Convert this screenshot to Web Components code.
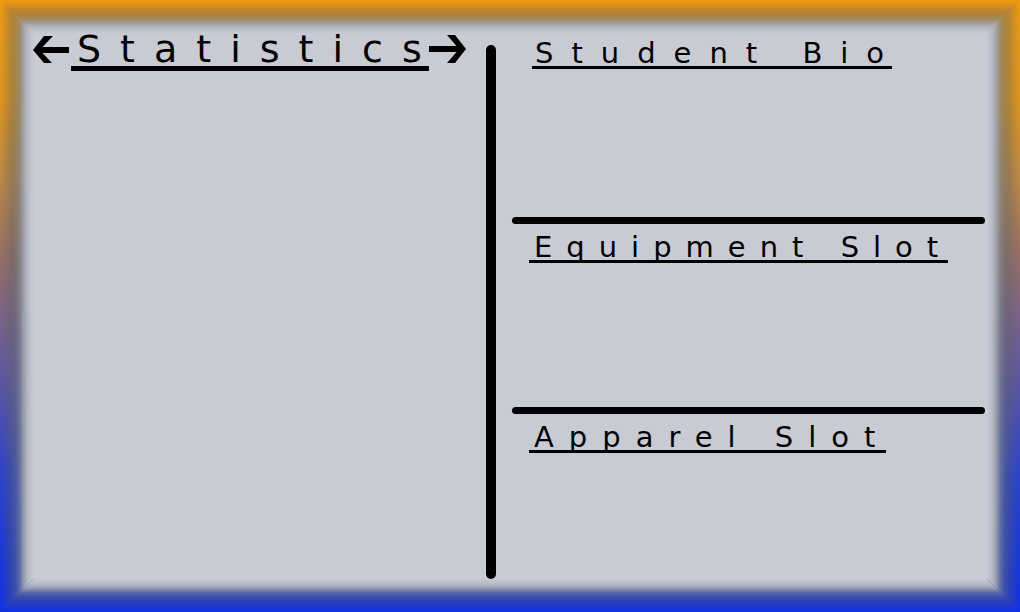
<!DOCTYPE html>
<html lang="en">
<head>
<meta charset="utf-8">
<title>Student Profile</title>
<style>
  body { margin: 0; font-family: "DejaVu Sans", sans-serif; color: #000; }
</style>
</head>
<body>
<glow-frame>
  <profile-board>
    <page-switcher slot="main">Statistics</page-switcher>
    <info-slot slot="side" style="--tracking: 18px; --trim: -10px">Student Bio</info-slot>
    <info-slot slot="side" style="--tracking: 14px">Equipment Slot</info-slot>
    <info-slot slot="side" style="--tracking: 15px">Apparel Slot</info-slot>
  </profile-board>
</glow-frame>

<script>
class BaseElement extends HTMLElement {
  constructor() {
    super();
    this.attachShadow({ mode: "open" }).innerHTML = this.constructor.markup;
  }
}

class GlowFrame extends BaseElement {
  static markup = `
    <style>
      :host {
        --edge: 34px;
        --fade: rgba(90,100,90,.06) 0%, rgba(90,95,90,.2) 15%, rgba(90,98,98,.4) 32%, rgba(100,108,112,.52) 45%, rgba(125,132,140,.7) 58%, rgba(156,161,171,.93) 69%, #b2b6c0 80%, #c0c3cd 90%, #c8cbd4 100%;
        display: flex; box-sizing: border-box; position: relative;
        min-height: 100vh; padding: 32px;
        background: linear-gradient(#fb9d08 0%, #f09c14 6%, #e89818 16%, #c08a48 30%, #a07460 40%, #80648a 51%, #5050b4 66%, #2840d4 78%, #1432e4 92%, #0c2cf0 100%);
      }
      .edge { position: absolute; inset: 0; pointer-events: none; }
      .top { background: linear-gradient(to bottom, var(--fade)) top / 100% var(--edge) no-repeat;
        clip-path: polygon(0 0, 100% 0, calc(100% - var(--edge)) var(--edge), var(--edge) var(--edge)); }
      .bottom { background: linear-gradient(to top, var(--fade)) bottom / 100% var(--edge) no-repeat;
        clip-path: polygon(0 100%, 100% 100%, calc(100% - var(--edge)) calc(100% - var(--edge)), var(--edge) calc(100% - var(--edge))); }
      .left { background: linear-gradient(to right, var(--fade)) left / var(--edge) 100% no-repeat;
        clip-path: polygon(0 0, var(--edge) var(--edge), var(--edge) calc(100% - var(--edge)), 0 100%); }
      .right { background: linear-gradient(to left, var(--fade)) right / var(--edge) 100% no-repeat;
        clip-path: polygon(100% 0, calc(100% - var(--edge)) var(--edge), calc(100% - var(--edge)) calc(100% - var(--edge)), 100% 100%); }
      .fill { background: #c8cbd4; inset: calc(var(--edge) - 1px); }
      main { flex: 1; display: flex; position: relative; min-width: 0; }
    </style>
    <div class="edge fill"></div>
    <div class="edge top"></div><div class="edge bottom"></div>
    <div class="edge left"></div><div class="edge right"></div>
    <main><slot></slot></main>`;
}

class ProfileBoard extends BaseElement {
  static markup = `
    <style>
      :host { flex: 1; display: grid; grid-template-columns: minmax(0, 454fr) 10px minmax(0, 492fr); }
      .rule { background: #000; border-radius: 5px; margin: 13px 0 1px; }
      .side { display: grid; grid-template-rows: 185fr 190fr 173fr; padding-left: 16px; margin-right: 3px; }
    </style>
    <section><slot name="main"></slot></section>
    <div class="rule"></div>
    <section class="side"><slot name="side"></slot></section>`;
}

class PageSwitcher extends BaseElement {
  static markup = `
    <style>
      :host { display: flex; align-items: flex-start; margin-right: 20px; }
      button { appearance: none; border: 0; padding: 0; background: none; color: inherit; cursor: pointer; flex: none; width: 38px; height: 36px; }
      svg { display: block; width: 38px; height: 36px; }
      h1 { box-sizing: border-box; flex: 1; min-width: 0; margin: 0 -1px 0 1px; padding-left: 6px; height: 39px; border-bottom: 5px solid; font-size: 38px; font-weight: 400; line-height: 34px; letter-spacing: 19px; white-space: nowrap; }
    </style>
    <button type="button" aria-label="Previous page"><svg viewBox="0 0 38 36"><path d="M12 4h9L10.500 15H37v6H10.500L20 31h-8L1 18z" fill="currentColor"/></svg></button>
    <h1><slot></slot></h1>
    <button type="button" aria-label="Next page"><svg viewBox="0 0 38 36"><path d="M27 3h-8l9.500 11H1v6h27.500L19 31h8L38 17z" fill="currentColor"/></svg></button>`;
}

class InfoSlot extends BaseElement {
  static markup = `
    <style>
      :host { display: block; }
      .rule { height: 7px; border-radius: 4px; background: #000; }
      :host(:first-of-type) .rule { display: none; }
      :host(:first-of-type) h2 { margin: 6px 0 0 20px; padding-left: 3px; }
      h2 { box-sizing: border-box; display: block; width: max-content; margin: 8px 0 0 17px; padding-left: 5px; height: 31px; border-bottom: 3px solid; font-size: 29px; font-weight: 400; line-height: 30px; letter-spacing: var(--tracking); white-space: nowrap; }
      span { display: inline-block; margin-right: var(--trim, -4px); }
    </style>
    <div class="rule"></div>
    <h2><span><slot></slot></span></h2>`;
}

customElements.define("glow-frame", GlowFrame);
customElements.define("profile-board", ProfileBoard);
customElements.define("page-switcher", PageSwitcher);
customElements.define("info-slot", InfoSlot);
</script>
</body>
</html>
